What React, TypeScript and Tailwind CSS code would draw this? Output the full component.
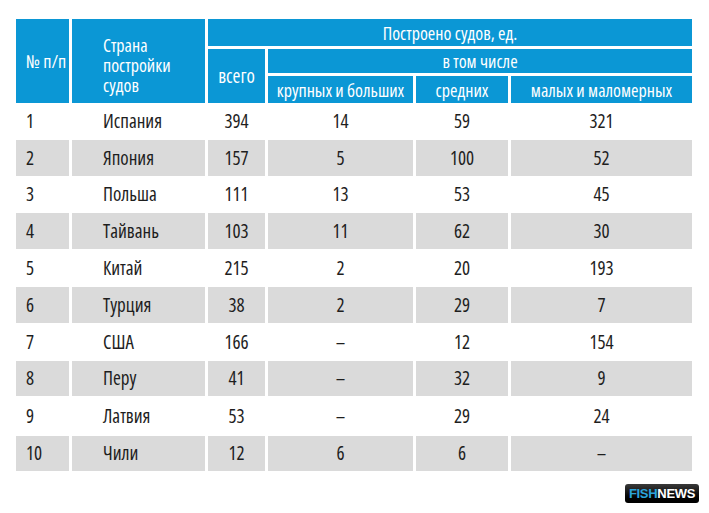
const rows: { n: string; c: string; v: string[]; h: string; grey: boolean }[] = [
  { n: '1', c: 'Испания', v: ['394', '14', '59', '321'], h: 'h-[37px]', grey: false },
  { n: '2', c: 'Япония', v: ['157', '5', '100', '52'], h: 'h-[36px]', grey: true },
  { n: '3', c: 'Польша', v: ['111', '13', '53', '45'], h: 'h-[37px]', grey: false },
  { n: '4', c: 'Тайвань', v: ['103', '11', '62', '30'], h: 'h-[36px]', grey: true },
  { n: '5', c: 'Китай', v: ['215', '2', '20', '193'], h: 'h-[38px]', grey: false },
  { n: '6', c: 'Турция', v: ['38', '2', '29', '7'], h: 'h-[36px]', grey: true },
  { n: '7', c: 'США', v: ['166', '–', '12', '154'], h: 'h-[38px]', grey: false },
  { n: '8', c: 'Перу', v: ['41', '–', '32', '9'], h: 'h-[35px]', grey: true },
  { n: '9', c: 'Латвия', v: ['53', '–', '29', '24'], h: 'h-[40px]', grey: false },
  { n: '10', c: 'Чили', v: ['12', '6', '6', '–'], h: 'h-[35px]', grey: true },
];

const cols = 'grid grid-cols-[53px_133px_57px_145px_92px_181px] gap-x-[3px]';

export default function App() {
  return (
    <div className="w-[709px] h-[513px] bg-white pt-[19px] pl-[16px] font-['Open_Sans',sans-serif] font-stretch-condensed text-[#1e1e1e]">
      <div className="w-[676px]">
        <div className={`${cols} grid-rows-[27px_24px_27px] gap-y-[3px] text-white text-[18px] leading-[22px]`}>
          <div className="row-span-3 bg-[#0b97d5] flex items-center pl-[10px]">№ п/п</div>
          <div className="row-span-3 bg-[#0b97d5] flex flex-col justify-start pl-[31px] pt-[16px]">
            <div className="h-[20px] leading-[20px]">Страна</div>
            <div className="h-[20px] leading-[20px]">постройки</div>
            <div className="h-[20px] leading-[20px]">судов</div>
          </div>
          <div className="col-span-4 bg-[#0b97d5] flex items-center justify-center">Построено судов, ед.</div>
          <div className="row-span-2 bg-[#0b97d5] flex items-center justify-center text-[19px]">всего</div>
          <div className="col-span-3 bg-[#0b97d5] flex items-center justify-center">в том числе</div>
          <div className="bg-[#0b97d5] flex items-center justify-center">крупных и больших</div>
          <div className="bg-[#0b97d5] flex items-center justify-center">средних</div>
          <div className="bg-[#0b97d5] flex items-center justify-center">малых и маломерных</div>
        </div>
        {rows.map((r) => {
          const bg = r.grey ? 'bg-[#dadada]' : 'bg-white';
          return (
            <div key={r.n} className={`${cols} ${r.h} text-[19px]`}>
              <div className={`${bg} flex items-center pl-[10px]`}>{r.n}</div>
              <div className={`${bg} flex items-center pl-[31px]`}>{r.c}</div>
              {r.v.map((x, i) => (
                <div key={i} className={`${bg} flex items-center justify-center`}>{x}</div>
              ))}
            </div>
          );
        })}
      </div>
      <div className="w-[683px] flex justify-end mt-[13px]">
        <div className="h-[19px] w-[74px] rounded-[3px] bg-gradient-to-b from-[#3a3a3a] via-[#111111] to-[#000000] flex items-center justify-center font-['Liberation_Sans',Arial,sans-serif] font-stretch-normal font-bold text-[13px] leading-none tracking-[-0.3px]">
          <span className="text-[#2aa3dc]">FISH</span>
          <span className="text-white">NEWS</span>
        </div>
      </div>
    </div>
  );
}
